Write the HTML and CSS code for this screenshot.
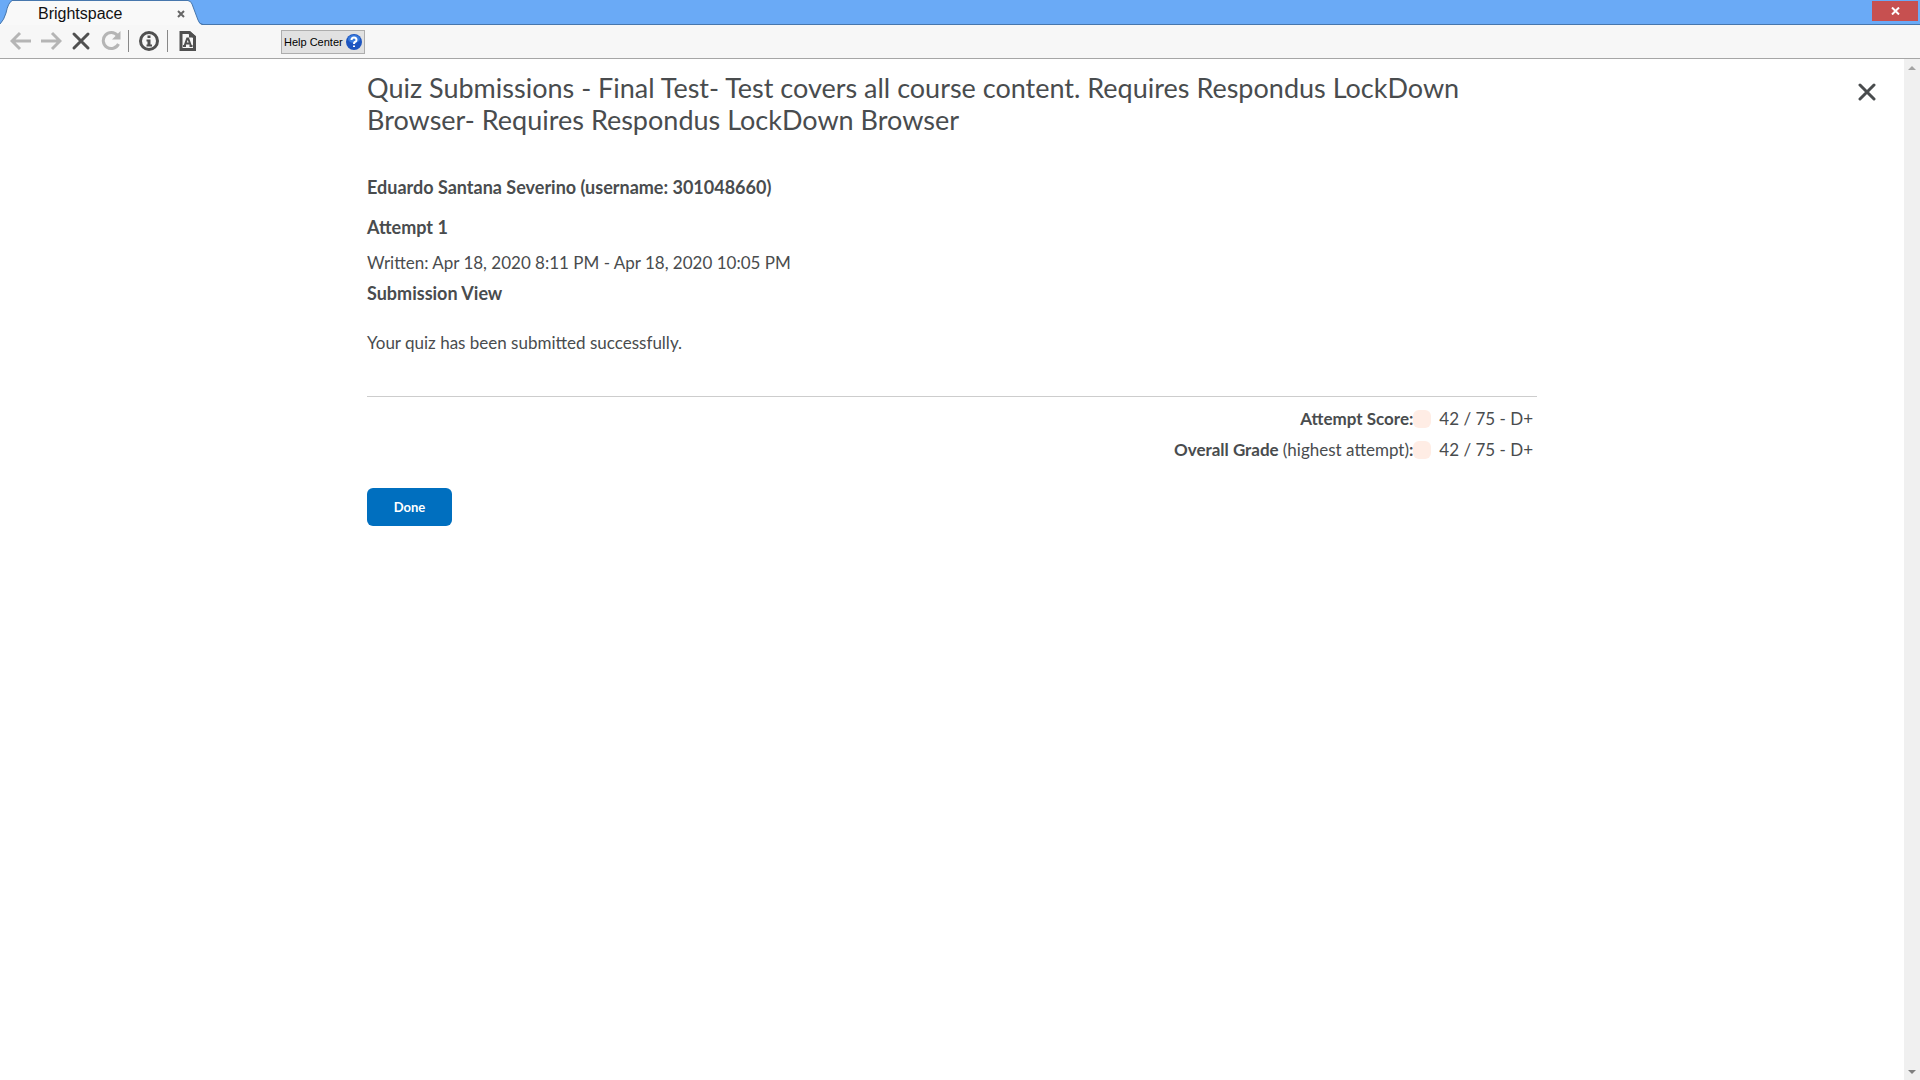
FILE: index.html
```html
<!DOCTYPE html>
<html lang="en">
<head>
<meta charset="utf-8">
<title>Brightspace</title>
<link rel="stylesheet" href="styles.css">
</head>
<body>
<header class="chrome">
  <div class="tabstrip">
    <div class="tab">
      <svg class="tab-shape" viewBox="0 0 204 25" aria-hidden="true"><path class="tab-fill" d="M0 25V24Q4 20 6 13Q8 3 12 1H188Q191 1 192 4L198 20Q199 24 202 25Z"/><path class="tab-edge" d="M0 24Q4 20 6 13Q8 3 12 .5H188Q191 1 192 4L198 20Q199 24 203 24.5"/></svg>
      <span class="tab-title">Brightspace</span>
      <button class="tab-close" aria-label="Close tab"><svg width="8" height="8" viewBox="0 0 8 8"><path d="M1 1L7 7M7 1L1 7"/></svg></button>
    </div>
    <button class="window-close" aria-label="Close window"><svg width="9" height="8" viewBox="0 0 9 8"><path d="M1 .5L8 7.500M8 .5L1 7.500"/></svg></button>
  </div>
  <nav class="toolbar" aria-label="Browser controls">
    <button class="tool faded" aria-label="Back"><svg width="22" height="20" viewBox="0 0 22 20"><path class="arrow" d="M21 10H2M10 2L2 10L10 18"/></svg></button>
    <button class="tool faded" aria-label="Forward"><svg width="22" height="20" viewBox="0 0 22 20"><path class="arrow" d="M1 10H20M12 2L20 10L12 18"/></svg></button>
    <button class="tool stop" aria-label="Stop"><svg width="22" height="20" viewBox="0 0 22 20"><path d="M4 3L18 17M18 3L4 17" stroke-linecap="round"/></svg></button>
    <button class="tool faded reload" aria-label="Reload"><svg width="22" height="20" viewBox="0 0 22 20"><path d="M17.500 4.500A8 8 0 1 0 18.500 13"/><path class="solid" d="M20.500 0V8.500H12Z"/></svg></button>
    <span class="divider"></span>
    <button class="tool" aria-label="Information"><svg width="22" height="20" viewBox="0 0 22 20"><circle cx="11" cy="10" r="8.500"/><path class="solid" d="M9.500 4.500H12.500V7H9.500ZM8.500 8.500H12.500V13.500H14V15.500H8.500V13.500H9.500V10.500H8.500Z"/></svg></button>
    <span class="divider"></span>
    <button class="tool" aria-label="Text size"><svg width="22" height="20" viewBox="0 0 22 20"><path class="sheet" d="M4 1.500H12L17.500 6V18.500H4Z"/><path class="solid" d="M12 1V6.500H18.500V5L13 0Z"/><path class="glyph" d="M7.500 15L10.200 7.500H11.200L14 15M8.500 12.500H13M6 15H9M12.500 15H15.500"/></svg></button>
    <button class="help"><span>Help Center</span><svg width="16" height="16" viewBox="0 0 16 16" aria-hidden="true"><circle cx="8" cy="8" r="8" fill="#1d55c0"/><ellipse cx="8" cy="5" rx="6" ry="4" fill="#397bdd"/><path d="M5.500 6Q5.500 3.500 8 3.500T10.500 6Q10.500 7.500 9 8Q8 8.500 8 10M8 11.500V13" fill="none" stroke="#fff" stroke-width="2"/></svg></button>
  </nav>
</header>
<div class="viewport">
  <main class="page">
    <button class="page-close" aria-label="Close"><svg width="18" height="18" viewBox="0 0 18 18"><path d="M2 2L16 16M16 2L2 16"/></svg></button>
    <article class="content">
      <h1>Quiz Submissions - Final Test- Test covers all course content. Requires Respondus LockDown Browser- Requires Respondus LockDown Browser</h1>
      <h2 class="student">Eduardo Santana Severino (username: 301048660)</h2>
      <h2 class="attempt">Attempt 1</h2>
      <p>Written: Apr 18, 2020 8:11 PM - Apr 18, 2020 10:05 PM</p>
      <h2>Submission View</h2>
      <p class="message">Your quiz has been submitted successfully.</p>
      <dl class="scores">
        <dt>Attempt Score:</dt><dd><span class="swatch"></span>42 / 75 - D+</dd>
        <dt>Overall Grade <span class="note">(highest attempt)</span>:</dt><dd><span class="swatch"></span>42 / 75 - D+</dd>
      </dl>
      <button class="done">Done</button>
    </article>
  </main>
  <div class="scrollbar" aria-hidden="true">
    <svg width="8" height="4" viewBox="0 0 8 4"><path d="M0 4L4 0L8 4Z" fill="#a3a3a3"/></svg>
    <svg width="8" height="4" viewBox="0 0 8 4"><path d="M0 0L4 4L8 0Z" fill="#808080"/></svg>
  </div>
</div>
</body>
</html>
```
FILE: styles.css
```css
* { box-sizing: border-box; }
body {
  margin: 0;
  min-height: 100vh;
  display: flex;
  flex-direction: column;
  background: #fff;
  color: #494c4e;
  font: 17px/30px Lato, sans-serif;
}
button {
  border: 0;
  padding: 0;
  background: none;
  font: inherit;
  color: inherit;
  display: flex;
  align-items: center;
  justify-content: center;
}
svg { display: block; fill: none; }
h1, h2, p, dl, dd { margin: 0; }

.tabstrip {
  display: flex;
  justify-content: space-between;
  align-items: flex-start;
  height: 25px;
  background: #6aaaf6;
  border-bottom: 1px solid #4777ad;
}
.tab {
  position: relative;
  display: flex;
  align-items: center;
  justify-content: space-between;
  width: 204px;
  height: 25px;
  padding: 2px 19px 0 38px;
  color: #111;
  font: 16px/22px "Liberation Sans", Arial, sans-serif;
}
.tab-shape { position: absolute; inset: 0; width: 204px; height: 25px; }
.tab-fill { fill: #f9f9f9; }
.tab-edge { stroke: #4777ad; }
.tab-title, .tab-close { position: relative; }
.tab-close svg { stroke: #666; stroke-width: 2; }
.window-close {
  width: 46px;
  height: 20px;
  margin: 1px 2px 0 0;
  background: #c75050;
}
.window-close svg { stroke: #fff; stroke-width: 2; }

.toolbar {
  display: flex;
  align-items: center;
  height: 34px;
  padding: 0 0 1px 10px;
  background: #f7f7f7;
  border-bottom: 1px solid #a6a6a6;
}
.tool { margin-right: 8px; }
.tool svg { stroke: #505050; stroke-width: 3; }
.tool .solid { fill: #505050; stroke: none; }
.tool .glyph { stroke-width: 2; }
.tool.faded svg { stroke: #b5b5b5; }
.tool.faded .solid { fill: #b5b5b5; }
.tool.reload { margin-right: 6px; }
.divider { width: 1px; height: 22px; margin-right: 9px; background: #888; }
.divider + .tool { margin-right: 7px; }
.help {
  gap: 3px;
  height: 24px;
  margin: 1px 0 0 75px;
  padding: 0 2px;
  border: 1px solid #adadad;
  background: #e1e1e1;
  color: #000;
  font: 11px/16px "Liberation Sans", Arial, sans-serif;
}

.viewport { flex: 1; display: flex; }
.page { flex: 1; position: relative; padding: 13px 24px 40px; }
.page-close { position: absolute; top: 24px; right: 28px; }
.page-close svg { stroke: #494c4e; stroke-width: 3; stroke-linecap: round; }
.scrollbar {
  width: 16px;
  padding: 7px 0 6px;
  display: flex;
  flex-direction: column;
  align-items: center;
  justify-content: space-between;
  background: #f0f0f0;
}
.content { max-width: 1170px; margin: 0 auto; }
h1 { margin-bottom: 36px; font-size: 27px; line-height: 32px; font-weight: 400; }
h2 { font-size: 18px; line-height: 30px; font-weight: 700; }
.student { margin-bottom: 10px; }
.attempt { margin-bottom: 6px; }
.message { margin: 20px 0 38px; }
.scores {
  display: grid;
  grid-template-columns: 1fr auto;
  row-gap: 1px;
  padding: 7px 4px 0 0;
  border-top: 1px solid #cdcdcd;
}
.scores dt { text-align: right; font-weight: 700; }
.scores .note { font-weight: 400; }
.scores dd { display: flex; align-items: center; }
.swatch {
  width: 18px;
  height: 18px;
  margin-right: 8px;
  border-radius: 6px;
  background: #ffede5;
}
.done {
  width: 85px;
  height: 38px;
  margin-top: 23px;
  border-radius: 6px;
  background: #006fbf;
  color: #fff;
  font-size: 13px;
  line-height: 20px;
  font-weight: 700;
}
```
